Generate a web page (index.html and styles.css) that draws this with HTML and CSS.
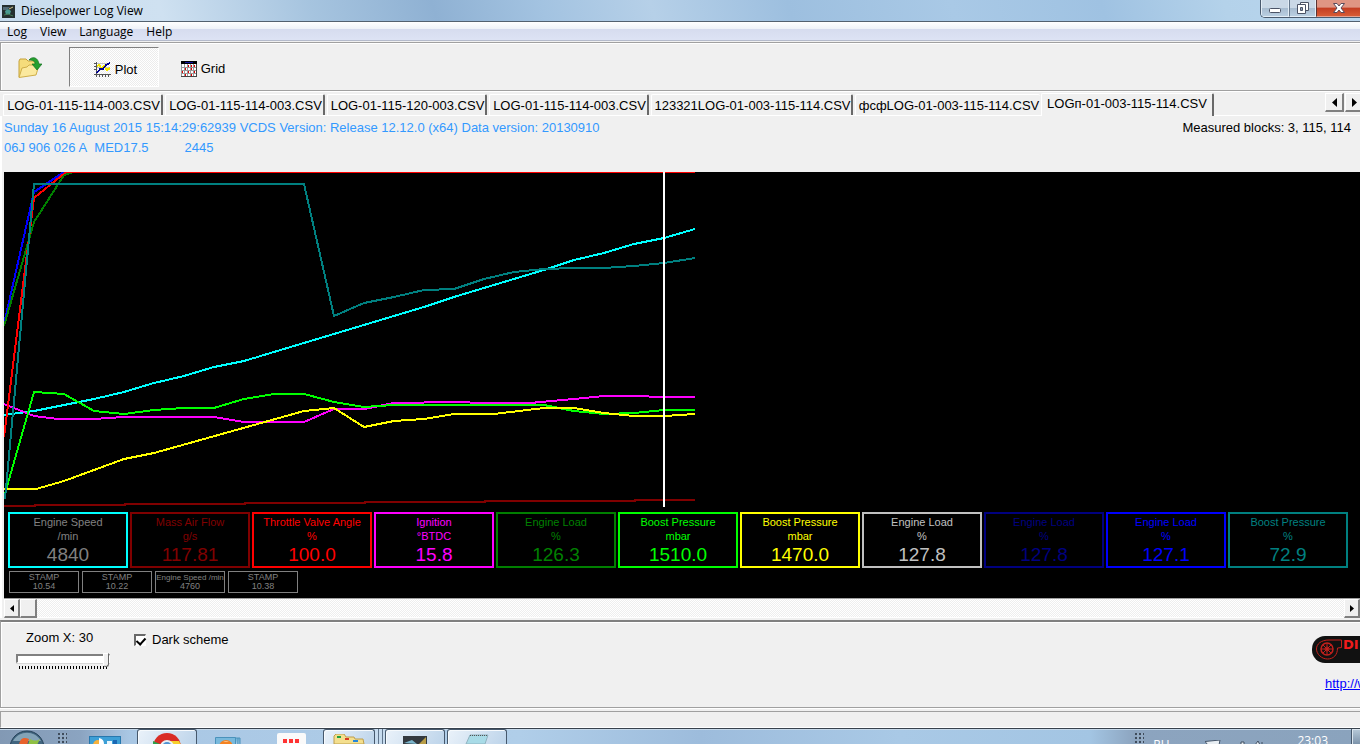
FILE: index.html
```html
<!DOCTYPE html>
<html lang="en">
<head>
<meta charset="utf-8">
<title>Dieselpower Log View</title>
<link rel="stylesheet" href="styles.css">
</head>
<body>
<div class="app">
  <header class="titlebar">
    <svg class="app-icon" width="13" height="13" viewBox="0 0 13 13"><rect width="13" height="13" fill="#26302f"/><path d="M1 2h7l-3 3H1z" fill="#536a75"/><path d="M3 6l3-2 3 2-1 3-4 1z" fill="#4a9b91"/><path d="M7 4l4-2" stroke="#d4c58b"/><path d="M2 10l4-1 5 2" stroke="#457b55" fill="none"/></svg>
    <h1>Dieselpower Log View</h1>
    <div class="window-buttons">
      <button class="wb wb-min" aria-label="Minimize"><svg width="14" height="8" viewBox="0 0 14 8"><rect x="1.500" y="2.500" width="11" height="4" rx="1" fill="#fff" stroke="#4b5366"/></svg></button>
      <button class="wb wb-max" aria-label="Restore"><svg width="12" height="12" viewBox="0 0 12 12"><path d="M3.500 .5h8v8h-8z" fill="#fff" stroke="#4b5366"/><path d="M.5 2.500h8v9h-8z" fill="#fff" stroke="#4b5366"/><path d="M3.500 5.500h2v3h-2z" fill="#8fa0b8" stroke="#4b5366"/></svg></button>
      <button class="wb wb-close" aria-label="Close"><svg width="12" height="10" viewBox="0 0 12 10"><path d="M.5.5h3.500l2 2.500 2-2.500h3.500L8 5l3.500 4.500H8L6 7 4 9.500H.5L4 5z" fill="#fff" stroke="#5a4b5c"/></svg></button>
    </div>
  </header>

  <nav class="menubar">
    <button>Log</button><button>View</button><button>Language</button><button>Help</button>
  </nav>

  <div class="toolbar">
    <button class="tool tool-open" aria-label="Open log"><svg width="24" height="22" viewBox="0 0 24 22"><path d="M1 20V4l1-2h6l2 2h8v5" fill="#f5dc7b" stroke="#c6a23a"/><path d="M1 20.500L4 11l5-1 2-2h10l-3 10z" fill="#fbe99e" stroke="#cfae48"/><path d="M11 3c3-4 9-3 10 4h3l-5 6-5-6h3c0-3-2-4-6-4z" fill="#25a02f" stroke="#13701d" stroke-width=".7"/></svg></button>
    <button class="tool tool-plot" aria-pressed="true"><svg width="17" height="16" viewBox="0 0 17 16" shape-rendering="crispEdges"><path d="M3 1.500h13M3 5.500h13" stroke="#c4c4c4"/><path d="M2.500 0v15M0 1.500h2M0 4.500h2M0 7.500h2M0 12.500h17M5.500 13v2M8.500 13v2M11.500 13v2M14.500 13v2" stroke="#555" fill="none"/><path d="M3 4l2-1 3 4 2-3 3 4 3-2" stroke="#f3e500" stroke-width="2" fill="none"/><path d="M3 11l3-4h3l3-4 4-2" stroke="#000090" stroke-width="1.500" fill="none"/></svg>Plot</button>
    <button class="tool tool-grid"><svg width="16" height="16" viewBox="0 0 16 16" shape-rendering="crispEdges"><rect width="16" height="16" fill="#fff"/><path d="M.5 3v13M3.500 3v12M6.500 3v12M9.500 3v12M12.500 3v12M0 6.500h16M0 9.500h16M0 12.500h16" stroke="#999"/><path d="M15.500 0v16M0 15.500h16" stroke="#444"/><path d="M0 0h16v3H0z" fill="#000"/><path d="M4 1h8v1H4z" fill="#1010a0"/><path d="M7 5h1M10 5h1M13 5h1M4 8h1M10 8h1M1 11h1M7 11h1M13 11h1M4 14h1M10 14h1" stroke="#e00000" stroke-width="2"/></svg>Grid</button>
  </div>

  <div class="tabs">
    <div class="tab-list" role="tablist">
      <button class="tab" role="tab">LOG-01-115-114-003.CSV</button>
      <button class="tab" role="tab">LOG-01-115-114-003.CSV</button>
      <button class="tab" role="tab">LOG-01-115-120-003.CSV</button>
      <button class="tab" role="tab">LOG-01-115-114-003.CSV</button>
      <button class="tab tab-long" role="tab">123321LOG-01-003-115-114.CSV</button>
      <button class="tab tab-mid" role="tab">фсфLOG-01-003-115-114.CSV</button>
      <button class="tab tab-active" role="tab" aria-selected="true">LOGп-01-003-115-114.CSV</button>
    </div>
    <div class="tab-nav">
      <button class="arrow" aria-label="Scroll tabs left"><svg width="5" height="9" viewBox="0 0 5 9"><path d="M5 0v9L0 4.500z"/></svg></button>
      <button class="arrow" aria-label="Scroll tabs right"><svg width="5" height="9" viewBox="0 0 5 9"><path d="M0 0v9l5-4.500z"/></svg></button>
    </div>
  </div>

  <main class="page">
    <section class="info">
      <div class="info-text">
        <p>Sunday 16 August 2015 15:14:29:62939 VCDS Version: Release 12.12.0 (x64) Data version: 20130910</p>
        <p class="ecu"><span>06J 906 026 A&nbsp; MED17.5</span><span>2445</span></p>
      </div>
      <p class="blocks">Measured blocks: 3, 115, 114</p>
    </section>

    <section class="plot">
      <svg class="chart" width="700" height="336" viewBox="4 172 700 336" shape-rendering="crispEdges" role="img" aria-label="Log plot">
        <g fill="none" stroke-width="2">
          <path stroke="#00f" d="M4 324L34 192 64 172"/>
          <path stroke="#008000" d="M4 326L34 222 64 175 74 172"/>
          <path stroke="#800000" d="M4 506H35V505H125V504H245V503H365V502H485V501H635V500H695"/>
          <path stroke="#0ff" d="M4 415L34 411 64 405 94 399 124 392 154 383 184 376 214 367 244 361 274 352 304 343 334 334 364 325 394 316 424 307 454 297 484 288 514 279 544 270 574 260 604 253 634 244 664 238 695 229"/>
          <path stroke="#f0f" d="M4 404L34 416 58 419H94L124 417H214L244 422H304L334 409H364L394 403 455 402 484 403H530L574 399 604 396H634L664 397H695"/>
          <path stroke="#0f0" d="M4 497L34 392 64 394 94 411 124 414 154 410 184 408H214L244 399 274 394H304L334 402 364 407 394 405H544L574 411 604 414 634 413 664 410H695"/>
          <path stroke="#ff0" d="M4 489H36L64 481 94 470 124 459 154 453 304 411 334 408 364 427 394 421 424 419 454 414H494L544 408H574L604 413 634 416H664L695 414"/>
          <path stroke="#f00" d="M4 437L34 198 66 172H695"/>
          <path stroke="#008080" d="M5 499L34 184H304L334 316 364 303 394 297 424 290 454 289 484 279 514 272 544 269 574 268H604L634 266 664 263 695 258"/>
          <path stroke="#fff" d="M664 172V507"/>
        </g>
      </svg>
      <div class="gauges">
        <div class="gauge g-speed"><span>Engine Speed</span><span>/min</span><b>4840</b></div>
        <div class="gauge g-air"><span>Mass Air Flow</span><span>g/s</span><b>117.81</b></div>
        <div class="gauge g-throttle"><span>Throttle Valve Angle</span><span>%</span><b>100.0</b></div>
        <div class="gauge g-ignition"><span>Ignition</span><span>°BTDC</span><b>15.8</b></div>
        <div class="gauge g-load"><span>Engine Load</span><span>%</span><b>126.3</b></div>
        <div class="gauge g-boost"><span>Boost Pressure</span><span>mbar</span><b>1510.0</b></div>
        <div class="gauge g-boost2"><span>Boost Pressure</span><span>mbar</span><b>1470.0</b></div>
        <div class="gauge g-load2"><span>Engine Load</span><span>%</span><b>127.8</b></div>
        <div class="gauge g-load3"><span>Engine Load</span><span>%</span><b>127.8</b></div>
        <div class="gauge g-load4"><span>Engine Load</span><span>%</span><b>127.1</b></div>
        <div class="gauge g-duty"><span>Boost Pressure</span><span>%</span><b>72.9</b></div>
      </div>
      <div class="stamps">
        <div class="stamp"><span>STAMP</span><span>10.54</span></div>
        <div class="stamp"><span>STAMP</span><span>10.22</span></div>
        <div class="stamp"><span class="tight">Engine Speed /min</span><span>4760</span></div>
        <div class="stamp"><span>STAMP</span><span>10.38</span></div>
      </div>
    </section>

    <div class="scrollbar">
      <button class="arrow" aria-label="Scroll left"><svg width="4" height="7" viewBox="0 0 4 7"><path d="M4 0v7L0 3.500z"/></svg></button>
      <div class="thumb"></div>
      <button class="arrow arrow-end" aria-label="Scroll right"><svg width="4" height="7" viewBox="0 0 4 7"><path d="M0 0v7l4-3.500z"/></svg></button>
    </div>
  </main>

  <section class="controls">
    <div class="zoom">
      <label for="zoom">Zoom X: 30</label>
      <input id="zoom" type="range" min="1" max="30" value="30">
      <div class="ticks"></div>
    </div>
    <label class="check"><input type="checkbox" checked>Dark scheme</label>
    <div class="brand">
      <svg width="60" height="28" viewBox="0 0 60 28"><rect width="80" height="27" rx="13" fill="#111"/><g fill="none" stroke="#c3201c"><path d="M29.500 4v7.500l-4 .5c0 7-4 11-10 11S4.500 18 4.500 13 9 4 17 4z"/><circle cx="15" cy="13" r="6" stroke-width="1.500"/><circle cx="15" cy="13" r="2"/><path d="M15 7v12M9 13h12M11 9l8 8M19 9l-8 8"/></g><text class="logo-text" x="31" y="13">DI</text></svg>
      <a href="#">http://w</a>
    </div>
  </section>

  <div class="statusbar"></div>

  <footer class="taskbar">
    <button class="start" aria-label="Start"><svg width="36" height="15" viewBox="0 0 36 15"><circle cx="18" cy="18" r="17" fill="#41657f" stroke="#254158"/><path d="M4 11C10 0 26 0 32 11z" fill="#9ab8c9" opacity=".75"/><path d="M10 15c1-7 5-8 10-6l-2 6z" fill="#e8622c"/><path d="M21 9c4 2 7 2 10 0l-3 6h-9z" fill="#8fc043"/></svg></button>
    <span class="grip"></span>
    <button class="task task-panel" aria-label="Control panel"><svg width="32" height="8" viewBox="0 0 32 8"><rect x=".5" y=".5" width="31" height="14" fill="#3d9fd6" stroke="#2778ae"/><circle cx="9" cy="9" r="5" fill="#f7b23c"/><path d="M10 2a6 6 0 0 1 5 6h-5z" fill="#fff"/><path d="M18 5h5v5h-5z" fill="#eaf6fd"/><path d="M24 4h4v6h-4z" fill="#1a68b4"/></svg></button>
    <button class="task task-open task-chrome" aria-label="Chrome"><svg width="28" height="11" viewBox="0 0 28 11"><circle cx="14" cy="14" r="14" fill="#d92c25"/><path d="M0 8l7 3H0z" fill="#2fa04c"/><path d="M17 8h9l2 4h-9z" fill="#f7d02c"/><circle cx="14" cy="14" r="7" fill="#e9eff4"/><circle cx="14" cy="14" r="5" fill="#4f93d2"/></svg></button>
    <button class="task task-player" aria-label="Media player"><svg width="26" height="7" viewBox="0 0 26 7"><path d="M.5 9V.5h20V9M20 1h3v8M23 1h2v8" fill="#78b9dc" stroke="#4a92bb"/><circle cx="11" cy="10" r="7" fill="#f58220"/><path d="M8 5a7 7 0 0 1 6 0z" fill="#ffd9a8"/></svg></button>
    <button class="task task-red" aria-label="Application"><svg width="29" height="11" viewBox="0 0 29 11"><rect width="29" height="20" rx="2" fill="#fafafa"/><path d="M6 6h4v4H6zM12 6h4v4h-4zM18 6h4v4h-4z" fill="#f33"/></svg></button>
    <button class="task task-open task-files" aria-label="Explorer"><svg width="32" height="10" viewBox="0 0 32 10"><path d="M1 10V2l2-2h8l2 3h8l1 2h8l1 5z" fill="#f4df8e" stroke="#bd9e4c"/><path d="M4 2h4v2H4z" fill="#20a040"/><path d="M12 4h4v2h-4z" fill="#d83a20"/><path d="M20 6h5v2h-5z" fill="#2687d8"/></svg></button>
    <span class="stack"></span>
    <button class="task task-open task-app" aria-label="Dieselpower Log View"><svg width="24" height="8" viewBox="0 0 24 8"><path d="M0 0h24v8H0z" fill="#33393f"/><path d="M1 7l8-3 5 4z" fill="#7ab5cc"/><path d="M16 8l7-7v7z" fill="#b89d47"/></svg></button>
    <button class="task task-open task-note" aria-label="Notepad"><svg width="26" height="10" viewBox="0 0 26 10"><path d="M6 1h18l-3 9H2z" fill="#a8dbe7" stroke="#8fb3c0"/><path d="M6 1.500h18" stroke="#555" stroke-dasharray="1 1"/></svg></button>
    <div class="tray">
      <span class="grip"></span>
      <span class="lang">RU</span>
      <svg class="tray-icons" width="62" height="5" viewBox="0 0 62 5"><path d="M0 1.500l15-1.500-1 5H3z" fill="#e8eef3" stroke="#46566a"/><path d="M36 5V2h3v3M50 5l3-4 2 4M57 5V2" stroke="#3f4e61" fill="#e8eef3"/></svg>
      <span class="clock">23:03</span>
      <span class="desktop"></span>
    </div>
  </footer>
</div>
</body>
</html>
```
FILE: styles.css
```css
* { box-sizing: border-box; }

body {
  margin: 0;
  overflow: hidden;
  background: #f0f0f0;
  color: #000;
  font: 13px/16px "Liberation Sans", Arial, sans-serif;
}

p, h1 { margin: 0; font-weight: normal; }
svg { display: block; flex: none; }

button {
  display: flex;
  flex: none;
  align-items: center;
  justify-content: center;
  margin: 0;
  padding: 0;
  border: 0;
  background: none;
  color: inherit;
  font: inherit;
  white-space: nowrap;
}

.app {
  display: flex;
  flex-direction: column;
  height: 100vh;
  overflow: hidden;
}

/* Title bar */
.titlebar {
  display: flex;
  flex: none;
  align-items: center;
  height: 22px;
  padding: 1px 0 0 2px;
  border-bottom: 1px solid #53616f;
  background: linear-gradient(75deg, #c8dcee 0, #cfe1f1 12%, #a6c4df 23%, #8fb1d3 32%, #a3c3e1 40%, #b6d0e8 48%, #9dbfdf 58%, #a9c9e6 70%, #9fc2e2 81%, #b4d2ea 90%, #b9d6ee 100%);
}

.titlebar h1 {
  flex: 1;
  padding-left: 6px;
  font: 12px/16px "Open Sans", "Noto Sans", sans-serif;
}

.window-buttons {
  display: flex;
  flex: none;
  align-self: flex-start;
  width: 100px;
  height: 18px;
  margin-top: -1px;
  overflow: hidden;
  border: 1px solid #4a5a6e;
  border-width: 0 0 1px 1px;
  border-radius: 0 0 0 5px;
}

.wb {
  width: 28px;
  height: 17px;
  border: 1px solid #e3edf6;
  border-top: 0;
  background: linear-gradient(#cad8e6 50%, #a7bbcf 50%, #b9cee1);
}

.wb-min { padding-top: 3px; }
.wb-max { width: 27px; border-left-color: #66788c; }
.wb-close {
  width: 46px;
  border-color: #e6a08e;
  border-left-color: #5a3434;
  background: linear-gradient(#df9583 45%, #c33d22 50%, #d75b35);
}

/* Menu */
.menubar {
  display: flex;
  flex: none;
  gap: 13px;
  height: 21px;
  padding: 0 7px;
  border-bottom: 1px solid #a0a0a0;
  background: linear-gradient(#fff 0, #eef2f8 7px, #d6dcef 7px, #dde3f4 18px, #b4bacb 18px, #b4bacb 19px, #f0f0f0 19px);
  font: 12px/16px "Open Sans", "Noto Sans", sans-serif;
}

/* Toolbar */
.toolbar {
  display: flex;
  flex: none;
  height: 48px;
  padding-top: 4px;
  border: 1px solid #a0a0a0;
  border-width: 0 0 1px 1px;
  box-shadow: inset 1px 1px #fff, 0 1px #fff;
}

.tool { gap: 4px; }
.tool-open { width: 58px; height: 42px; }
.tool-plot {
  width: 90px;
  height: 40px;
  margin-left: 10px;
  padding: 5px 0 0 3px;
  border: 1px solid #fff;
  border-top-color: #808080;
  border-left-color: #808080;
  background: repeating-conic-gradient(#fff 0 25%, #ececec 0 50%) 0 0 / 2px 2px;
}
.tool-grid { width: 88px; height: 43px; }

/* Tabs */
.tabs {
  display: flex;
  flex: none;
  height: 25px;
  padding: 2px 0 0 3px;
}

.tab-list {
  display: flex;
  flex: 1;
  align-items: flex-end;
  gap: 2px;
  border-bottom: 1px solid #fff;
}

.tab {
  width: 160px;
  height: 21px;
  padding: 2px 0 0 2px;
  border: 1px solid #fff;
  border-right: 2px solid #696969;
  border-bottom: 0;
  border-radius: 2px 2px 0 0;
}
.tab-long { width: 202px; }
.tab-mid { width: 185px; border-right: 0; }
.tab-active {
  width: 173px;
  height: 23px;
  margin-left: -1px;
  margin-bottom: -1px;
  padding: 0 0 3px;
  background: #f0f0f0;
}

.tab-nav {
  display: flex;
  gap: 1px;
  width: 35px;
  overflow: hidden;
  border-bottom: 1px solid #fff;
}

.arrow {
  width: 19px;
  height: 19px;
  border: 1px solid #fff;
  border-right: 2px solid #808080;
  border-bottom: 2px solid #808080;
  background: #f0f0f0;
}

/* Log page */
.page {
  display: flex;
  flex: 1;
  flex-direction: column;
  padding-left: 4px;
  box-shadow: inset 2px 0 #fff;
}

.info {
  display: flex;
  justify-content: space-between;
  height: 56px;
  padding: 2px 9px 0 0;
  line-height: 20px;
  white-space: nowrap;
}
.info-text { color: #39f; }
.ecu { display: flex; gap: 36px; }

.plot {
  flex: 1;
  overflow: hidden;
  background: #000;
}

.gauges {
  display: grid;
  grid-template-columns: repeat(11, minmax(0, 120px));
  gap: 2px;
  padding: 4px 4px 0;
}

.gauge {
  display: flex;
  flex-direction: column;
  align-items: center;
  height: 56px;
  padding-top: 1px;
  border: 2px solid;
  font-size: 11px;
  line-height: 14px;
  white-space: nowrap;
}
.gauge b { font: 19px/24px "Liberation Sans", Arial, sans-serif; }

.g-speed { border-color: #0ff; color: #808080; }
.g-air { color: #800000; }
.g-throttle { color: #f00; }
.g-ignition { color: #f0f; }
.g-load { color: #008000; }
.g-boost { color: #0f0; }
.g-boost2 { color: #ff0; }
.g-load2 { color: #c0c0c0; }
.g-load3 { color: #000080; }
.g-load4 { color: #00f; }
.g-duty { color: #008080; }

.stamps {
  display: flex;
  gap: 3px;
  padding: 3px 5px;
}
.stamp {
  display: flex;
  flex-direction: column;
  align-items: center;
  width: 70px;
  height: 22px;
  padding-top: 1px;
  border: 1px solid #808080;
  color: #808080;
  font-size: 9px;
  line-height: 9px;
  white-space: nowrap;
}
.stamp .tight { font-size: 8px; }

.scrollbar {
  display: flex;
  height: 20px;
  border-top: 1px solid #a0a0a0;
  background: repeating-conic-gradient(#fff 0 25%, #eee 0 50%) 0 0 / 2px 2px;
  box-shadow: inset 0 -1px #fff;
}
.scrollbar .arrow { width: 16px; }
.thumb {
  width: 17px;
  height: 19px;
  border: 1px solid #fff;
  border-right: 2px solid #808080;
  border-bottom: 2px solid #808080;
  background: #f0f0f0;
}
.scrollbar .arrow-end { margin-left: auto; }

/* Controls */
.controls {
  display: flex;
  flex: none;
  align-items: flex-start;
  height: 88px;
  margin: 2px 0 3px;
  padding: 8px 0 0 15px;
  border: 1px solid #a0a0a0;
  border-top: 2px solid #808080;
  border-right: 0;
  box-shadow: inset 1px 1px #fff, 0 1px #fff;
}

.zoom { width: 94px; }
.zoom label { display: block; padding-left: 10px; }

.zoom input {
  display: block;
  width: 94px;
  height: 14px;
  margin: 5px 0 0;
  appearance: none;
  background: none;
}
.zoom input::-webkit-slider-runnable-track {
  height: 9px;
  border: 1px solid #fff;
  border-top: 2px solid #808080;
  border-left: 2px solid #808080;
  background: #fff;
  box-shadow: 0 1px #d8d8d8;
}
.zoom input::-webkit-slider-thumb {
  width: 6px;
  height: 14px;
  margin-top: -3px;
  appearance: none;
  border: 1px solid #fff;
  border-right-color: #696969;
  border-bottom-color: #696969;
  border-radius: 0 0 3px 3px;
  background: #f0f0f0;
}
.ticks {
  width: 88px;
  height: 3px;
  margin: 1px 0 0 3px;
  background: repeating-linear-gradient(90deg, #000 0 1px, transparent 1px 3px);
}

.check {
  display: flex;
  align-items: center;
  gap: 6px;
  margin: 2px 0 0 24px;
}
.check input {
  position: relative;
  width: 12px;
  height: 12px;
  margin: 0;
  appearance: none;
  border: 1px solid #fff;
  border-top: 2px solid #696969;
  border-left: 2px solid #696969;
  background: #fff;
}
.check input:checked::after {
  position: absolute;
  top: 0;
  left: 2px;
  width: 4px;
  height: 7px;
  border: solid #000;
  border-width: 0 2px 2px 0;
  content: "";
  transform: rotate(42deg);
}

.brand {
  width: 48px;
  margin-left: auto;
  padding-top: 6px;
  overflow: hidden;
}
.brand a {
  display: block;
  margin: 12px 0 0 13px;
  color: #00f;
}
.logo-text {
  fill: #f01c1c;
  font: bold 13px "DejaVu Sans", sans-serif;
}

.statusbar {
  flex: none;
  height: 17px;
  border: 1px solid #a0a0a0;
  border-width: 1px 0 0 1px;
  border-bottom: 1px solid #fff;
}

/* Taskbar */
.taskbar {
  display: flex;
  flex: none;
  align-items: flex-start;
  height: 16px;
  overflow: hidden;
  border-top: 1px solid #38424d;
  background: linear-gradient(90deg, #8299b4 0, #8ba4c1 80px, #a9c7e4 130px, #b0cee9 520px, #9dbcdc 700px, #a9c9e6 900px, #a3c5e3 1090px, #8ca4bf 1135px, #8aa3bd 100%);
  box-shadow: inset 0 1px #c6d9ea;
}

.start { margin: 1px 0 0 9px; }
.grip {
  flex: none;
  width: 9px;
  height: 11px;
  margin: 4px 0 0 13px;
  background: repeating-linear-gradient(90deg, transparent 0 2px, #94abc4 2px 4px), repeating-linear-gradient(#3f4c5c 0 2px, transparent 2px 4px);
}

.task { height: 15px; align-items: flex-end; }
.task-panel { margin-left: 22px; }
.task-open {
  width: 60px;
  border: 1px solid #46586c;
  border-bottom: 0;
  border-radius: 3px 3px 0 0;
  background: linear-gradient(120deg, #eaf2fa, #bdd4ea);
  box-shadow: inset 1px 1px #f6fafd;
}
.task-chrome { margin-left: 16px; }
.task-player { margin-left: 18px; }
.task-red { margin-left: 36px; }
.task-files { width: 52px; margin-left: 17px; }
.stack {
  width: 10px;
  height: 15px;
  background: repeating-linear-gradient(90deg, #c7dcef 0 3px, #60758c 3px 4px);
}
.task-note { margin-left: 2px; }

.tray {
  display: flex;
  align-items: flex-start;
  margin-left: auto;
  color: #fff;
  font: 12px/14px "Open Sans", "Noto Sans", sans-serif;
}
.tray .grip { margin: 4px 0 0; }
.lang { padding: 9px 0 0 9px; }
.tray-icons { margin: 11px 0 0 36px; }
.clock { padding: 5px 0 0 30px; }
.desktop {
  width: 9px;
  height: 15px;
  margin-left: 23px;
  border-left: 1px solid #46586c;
  background: linear-gradient(#b8cad9, #7d94ab);
  box-shadow: inset 1px 1px #dbe6ef;
}
```
